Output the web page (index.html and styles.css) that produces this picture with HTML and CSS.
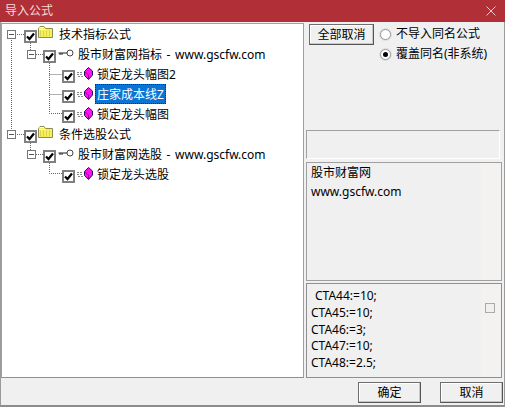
FILE: index.html
```html
<!DOCTYPE html>
<html lang="zh">
<head>
<meta charset="utf-8">
<title>导入公式</title>
<link rel="stylesheet" href="styles.css">
</head>
<body>
<svg width="0" height="0" class="defs">
  <defs>
    <symbol id="check" viewBox="0 0 13 13"><rect x="1" y="1" width="11" height="11" fill="#fff" stroke="#808080" stroke-width="2"/><path d="M3 6.5 L5.5 9 L10 3.5" fill="none" stroke="#000" stroke-width="2.2"/></symbol>
    <symbol id="folder" viewBox="0 0 15 12"><path d="M0.5 2.5 L2 0.5 H6 L7.5 2.5 H14.5 V11.5 H0.5 Z" fill="#f5f060" stroke="#8d8a55"/><path d="M1 3.5 H7.5 M1.5 1.5 H6" stroke="#fff"/><path d="M2 5 H14 M2 7 H14 M2 9 H14 M2 6 H14 M2 8 H14 M2 10 H14" stroke="#d9c93a" stroke-dasharray="1 2"/></symbol>
    <symbol id="key" viewBox="0 0 16 10"><circle cx="12" cy="5" r="3" fill="#fff" stroke="#444" stroke-width="1"/><path d="M0.5 5 H9 M2 5 V7 M4 5 V7" fill="none" stroke="#222"/></symbol>
    <symbol id="gem" viewBox="0 0 16 14"><path d="M0 6.5 H6 M0 8.5 H6 M1 10.5 H6" stroke="#888" stroke-dasharray="2 1"/><path d="M11.5 1.5 L15.5 5 V9 L11.5 13.5 L7.5 9.5 V5.5 Z" fill="#ff10f0" stroke="#2a1060" stroke-linejoin="bevel"/><path d="M8 6 L11.5 9 V13" fill="none" stroke="#a000a0"/></symbol>
  </defs>
</svg>
<div class="window">
  <header class="titlebar">
    <span class="title">导入公式</span>
    <svg class="close" width="10" height="10" viewBox="0 0 10 10"><path d="M0.5 0.5 L9.5 9.5 M9.5 0.5 L0.5 9.5" stroke="#e8c9ca" stroke-width="1"/></svg>
  </header>
  <main class="content">
    <section class="tree">
      <svg class="lines" width="100" height="180" viewBox="0 0 100 180">
        <path d="M11.5 38 V130 M17 34.5 H24 M30.5 43 V50 M36 54.5 H43 M30.5 143 V150 M36 154.5 H43 M49.5 63 V113.5 H62 M49.5 74.5 H62 M49.5 94.5 H62 M17 134.5 H24 M49.5 163 V173.5 H62" fill="none" stroke="#666" stroke-dasharray="1 1"/>
      </svg>
      <div class="row l1"><span class="exp"></span><svg class="cb"><use href="#check"/></svg><svg class="ico"><use href="#folder"/></svg><span class="label">技术指标公式</span></div>
      <div class="row l2"><span class="exp"></span><svg class="cb"><use href="#check"/></svg><svg class="ico"><use href="#key"/></svg><span class="label">股市财富网指标 - www.gscfw.com</span></div>
      <div class="row l3"><svg class="cb"><use href="#check"/></svg><svg class="ico"><use href="#gem"/></svg><span class="label">锁定龙头幅图2</span></div>
      <div class="row l3"><svg class="cb"><use href="#check"/></svg><svg class="ico"><use href="#gem"/></svg><span class="label selected">庄家成本线Z</span></div>
      <div class="row l3"><svg class="cb"><use href="#check"/></svg><svg class="ico"><use href="#gem"/></svg><span class="label">锁定龙头幅图</span></div>
      <div class="row l1"><span class="exp"></span><svg class="cb"><use href="#check"/></svg><svg class="ico"><use href="#folder"/></svg><span class="label">条件选股公式</span></div>
      <div class="row l2"><span class="exp"></span><svg class="cb"><use href="#check"/></svg><svg class="ico"><use href="#key"/></svg><span class="label">股市财富网选股 - www.gscfw.com</span></div>
      <div class="row l3"><svg class="cb"><use href="#check"/></svg><svg class="ico"><use href="#gem"/></svg><span class="label">锁定龙头选股</span></div>
    </section>
    <aside class="side">
      <div class="opts">
        <button class="btn all">全部取消</button>
        <div class="radios">
          <div class="radio"><span class="dot"></span>不导入同名公式</div>
          <div class="radio"><span class="dot on"></span>覆盖同名(非系统)</div>
        </div>
      </div>
      <div class="blank"></div>
      <div class="info">
        <div class="pane">股市财富网<br>www.gscfw.com</div>
        <div class="rail"></div>
      </div>
      <div class="code">
        <div class="pane codetext"><div class="first">CTA44:=10;</div><div>CTA45:=10;</div><div>CTA46:=3;</div><div>CTA47:=10;</div><div>CTA48:=2.5;</div></div>
        <div class="rail"><span class="mini"></span></div>
      </div>
    </aside>
  </main>
  <footer class="footer">
    <button class="btn ok">确定</button>
    <button class="btn cancel">取消</button>
  </footer>
</div>
</body>
</html>
```
FILE: styles.css
```css
* { box-sizing: border-box; }
html, body { margin: 0; padding: 0; }
body { width: 505px; height: 407px; overflow: hidden; background: #f0f0f0; font: 12px/20px "Noto Sans", "Noto Sans CJK SC", sans-serif; color: #000; }
.defs { position: absolute; }
.window { width: 505px; height: 407px; display: flex; flex-direction: column; border-bottom: 2px solid #8c8c8c; border-left: 1px solid #9a9a9a; border-right: 1px solid #9a9a9a; }
.titlebar { height: 22px; margin: 0 -1px; padding: 0 9px 0 5px; background: #b12f36; color: #f2dcdc; display: flex; align-items: center; justify-content: space-between; flex: none; font-size: 12px; }
.close { display: block; }
.content { display: flex; height: 356px; flex: none; gap: 1px; padding-top: 1px; }
.tree { position: relative; width: 303px; height: 355px; background: #fff; border: 1px solid #a0a0a0; border-bottom-color: #8f8f8f; flex: none; }
.lines { position: absolute; left: -2px; top: -24px; }
.row { height: 20px; display: flex; align-items: center; }
.l1 { padding-left: 5px; }
.l2 { padding-left: 25px; }
.l3 { padding-left: 60px; }
.exp { width: 9px; height: 9px; border: 1px solid #777; background: linear-gradient(#555, #555) center / 5px 1px no-repeat #fff; margin-right: 8px; flex: none; position: relative; }
.l2 .exp { margin-right: 7px; }
.cb { width: 13px; height: 13px; margin: 4px 1px 0 0; flex: none; position: relative; }
.ico { width: 16px; height: 14px; flex: none; }
.l1 .ico { width: 15px; height: 12px; margin-bottom: 4px; }
.l2 .ico { height: 10px; margin: 0 0 3px 1px; }
.l3 .ico { margin: 0 0 2px 1px; }
.label { display: block; height: 20px; line-height: 20px; margin-left: 5px; padding: 1px 1px 0; white-space: nowrap; }
.l2 .label { margin-left: 3px; word-spacing: 1.5px; }
.l3 .label { margin-left: 2px; padding: 1px 2px 0; }
.selected { background: #0a74d6; color: #fff; outline: 1px dotted #06345f; outline-offset: -1px; }
.side { width: 197px; flex: none; display: flex; flex-direction: column; }
.opts { height: 107px; display: flex; gap: 6px; padding-left: 4px; }
.btn { font: inherit; font-size: 12px; color: #000; background: #f0f0f0; border: 1px solid #6e6e6e; border-right-color: #555; border-bottom-color: #555; box-shadow: inset -1px -1px 0 #c8c8c8, inset 1px 1px 0 #fff; padding: 0; }
.all { width: 65px; height: 21px; margin-top: 1px; }
.radios { display: flex; flex-direction: column; padding-top: 1px; }
.radio { display: flex; align-items: center; gap: 5px; height: 20px; white-space: nowrap; }
.dot { width: 11px; height: 11px; border-radius: 50%; background: #fff; border: 1px solid #999; box-shadow: 0 0 0 1px #ddd; position: relative; flex: none; }
.on::after { content: ""; position: absolute; left: 2px; top: 2px; width: 5px; height: 5px; border-radius: 50%; background: #000; }
.blank { height: 29px; border: 1px solid #a0a0a0; border-right-color: #fff; border-bottom-color: #fff; margin: 0 2px 3px 1px; }
.info, .code { display: flex; border: 1px solid #a0a0a0; background: #f0f0f0; margin-left: 1px; }
.info { height: 119px; }
.code { height: 95px; margin-top: 2px; border-color: #8f8f8f; }
.pane { flex: 1; padding: 0 4px; line-height: 19px; background: #f0f0f0; }
.rail { width: 20px; background: #f3f2f0; display: flex; flex: none; }
.mini { width: 10px; height: 10px; border: 1px solid #aaa; background: #f0f0f0; }
.code .rail { padding: 19px 0 0 4px; }
.codetext { line-height: 16.8px; padding: 4px; }
.first { padding-left: 4px; }
.footer { flex: 1; display: flex; justify-content: flex-end; gap: 19px; padding: 4px 1px 0 0; }
.footer .btn { width: 63px; height: 21px; }
```
